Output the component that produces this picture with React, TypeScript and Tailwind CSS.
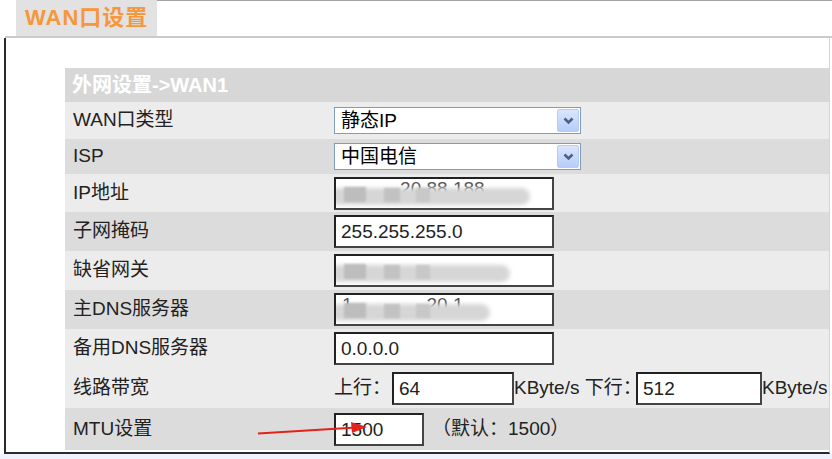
import React from "react";

const Chevron = () => (
  <svg width="11" height="8" viewBox="0 0 11 8">
    <path d="M1.5 1.5 L5.5 5.5 L9.5 1.5" stroke="#4d6185" strokeWidth="2.6" fill="none" />
  </svg>
);

const Select = ({ value }: { value: string }) => (
  <div className="flex h-[27px] w-[247px] items-center border border-[#7f9db9] bg-white">
    <span className="flex-1 pl-[6px] text-[19px] leading-none text-black">{value}</span>
    <div className="mr-[1px] flex h-[23px] w-[22px] items-center justify-center rounded-[2px] border border-[#b7cbf5] bg-gradient-to-b from-[#dbe6fd] to-[#b6ccfa]">
      <Chevron />
    </div>
  </div>
);

const TextBox = ({ value, w = "w-[220px]", blur }: { value?: string; w?: string; blur?: React.ReactNode }) => (
  <div
    className={`relative flex h-[33px] ${w} items-center overflow-hidden border-2 border-t-[#222] border-l-[#222] border-b-[#444] border-r-[#444] bg-white pl-[5px] text-[19px] leading-none text-[#222]`}
  >
    {value}
    {blur}
  </div>
);

// blurred-out address values
const Smudge = ({ text, width }: { text: string; width: string }) => (
  <>
    <span className="absolute left-[6px] top-[0px] whitespace-pre text-[19px] leading-none text-[#555]">{text}</span>
    <div className={`absolute left-[-6px] top-[9px] h-[17px] ${width} rounded-full bg-[#d6d6d6] blur-[2px]`} />
    <div className="absolute left-[8px] top-[8px] h-[15px] w-[22px] bg-[#bdbdbd] blur-[1px]" />
    <div className="absolute left-[48px] top-[9px] h-[14px] w-[16px] bg-[#c2c2c2] blur-[1px]" />
    <div className="absolute left-[80px] top-[9px] h-[14px] w-[14px] bg-[#c8c8c8] blur-[1px]" />
  </>
);

type Row = { label: React.ReactNode; tone: "light" | "dark"; h: string; content: React.ReactNode };

const rows: Row[] = [
  { label: "WAN口类型", tone: "light", h: "h-[37px]", content: <Select value="静态IP" /> },
  { label: "ISP", tone: "dark", h: "h-[35px]", content: <Select value="中国电信" /> },
  {
    label: "IP地址",
    tone: "light",
    h: "h-[38px]",
    content: <TextBox blur={<Smudge text="           20.88.188" width="w-[200px]" />} />,
  },
  { label: "子网掩码", tone: "dark", h: "h-[39px]", content: <TextBox value="255.255.255.0" /> },
  {
    label: "缺省网关",
    tone: "light",
    h: "h-[39px]",
    content: <TextBox blur={<Smudge text="" width="w-[180px]" />} />,
  },
  {
    label: "主DNS服务器",
    tone: "dark",
    h: "h-[39px]",
    content: <TextBox blur={<Smudge text="1              20.1" width="w-[160px]" />} />,
  },
  { label: "备用DNS服务器", tone: "light", h: "h-[39px]", content: <TextBox value="0.0.0.0" /> },
  {
    label: "线路带宽",
    tone: "light",
    h: "h-[40px]",
    content: (
      <div className="flex items-center text-[19px] text-[#222]">
        <span className="w-[58px]">上行：</span>
        <TextBox value="64" w="w-[122px]" />
        <span className="w-[122px] whitespace-nowrap">KByte/s 下行：</span>
        <TextBox value="512" w="w-[126px]" />
        <span className="whitespace-nowrap">KByte/s</span>
      </div>
    ),
  },
  {
    label: "MTU设置",
    tone: "dark",
    h: "h-[42px]",
    content: (
      <div className="flex items-center text-[19px] text-[#222]">
        <TextBox value="1500" w="w-[90px]" />
        <span className="ml-[8px] whitespace-nowrap">（默认：1500）</span>
      </div>
    ),
  },
];

export default function App() {
  return (
    <div
      className="relative h-[459px] w-[832px] overflow-hidden bg-white"
      style={{ fontFamily: '"Liberation Sans", "Noto Sans CJK SC", sans-serif' }}
    >
      <div className="flex h-[36px]">
        <div className="ml-[16px] flex w-[141px] items-center bg-[#e2e2e2] pl-[9px] pb-[2px] text-[22px] font-bold tracking-[1px] text-[#f7963a]">
          WAN口设置
        </div>
        <div className="flex-1 border-t border-[#a3a3a3]" />
      </div>
      <div className="ml-[5px] h-[2px] bg-[#cbcbcb]" />
      <div className="ml-[4px] mr-[2px] flex h-[416px] flex-col border-b-2 border-l-2 border-r border-b-[#2a2a2a] border-l-[#2a2a2a] border-r-[#d4d4d4] bg-white">
        <div className="ml-[59px] mt-[30px] flex flex-col">
          <div className="flex h-[34px] items-center bg-[#d7d7d7] pl-[7px] text-[20px] font-bold text-white">
            外网设置-&gt;WAN1
          </div>
          {rows.map((r, i) => (
            <div
              key={i}
              className={`flex ${r.h} items-center ${r.tone === "light" ? "bg-[#ececec]" : "bg-[#dcdcdc]"}`}
            >
              <div className="w-[269px] pl-[8px] text-[19px] text-[#222]">{r.label}</div>
              <div>{r.content}</div>
            </div>
          ))}
        </div>
      </div>
      <div className="h-[5px] bg-[#eef3fb]" />
      <svg className="absolute left-0 top-0" width="832" height="459">
        <path d="M258 433.5 L356 427.5" stroke="#e3221b" strokeWidth="2" />
        <path d="M351 422 L367 427 L352 433 Z" fill="#e3221b" />
      </svg>
    </div>
  );
}
